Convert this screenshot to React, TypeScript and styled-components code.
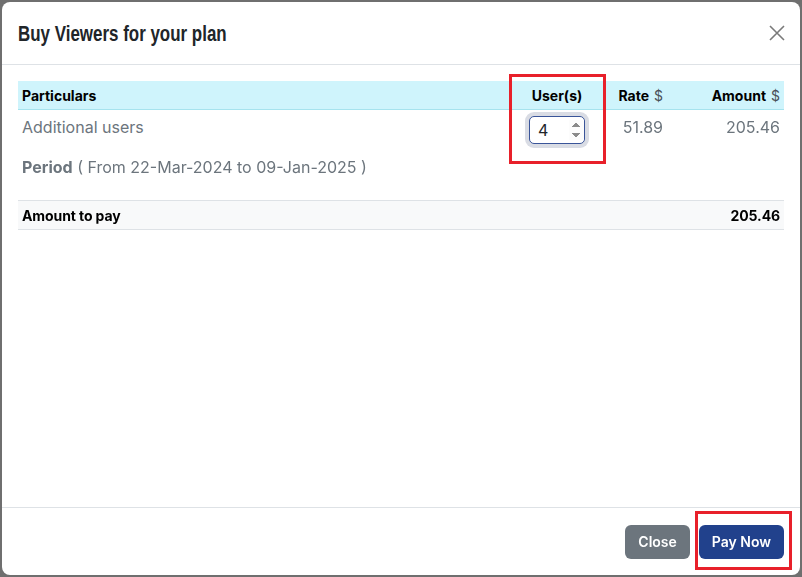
import styled, { createGlobalStyle } from 'styled-components';

const GlobalStyle = createGlobalStyle`
  html, body {
    margin: 0;
    padding: 0;
    height: 100%;
    background: #6f6f6f;
    overflow: hidden;
  }
  body {
    font-family: Inter, "Noto Sans", sans-serif;
    color: #212529;
  }
`;

const Backdrop = styled.div`
  position: relative;
  height: 100vh;
  padding: 2px;
  box-sizing: border-box;
`;

const Modal = styled.div`
  height: 100%;
  display: flex;
  flex-direction: column;
  background: #fff;
  border-radius: 8px;
  overflow: hidden;
`;

const Header = styled.div`
  display: flex;
  align-items: center;
  justify-content: space-between;
  height: 62px;
  padding: 0 16px;
  border-bottom: 1px solid #dee2e6;
`;

// condensed display face: squeeze a bold sans since no narrow font is installed
const Title = styled.h5`
  margin: 2px 0 0;
  font-family: "Liberation Sans", Arial, sans-serif;
  font-weight: 700;
  font-size: 22px;
  color: #212529;
  white-space: nowrap;
  transform: scaleX(0.77);
  transform-origin: left center;
`;

const CloseIcon = styled.button`
  display: flex;
  border: none;
  background: transparent;
  padding: 0;
  margin-right: -1px;
  cursor: pointer;
`;

const Body = styled.div`
  flex: 1;
  padding: 16px;
`;

const Row = styled.div<{ $head?: boolean; $total?: boolean }>`
  display: grid;
  grid-template-columns: 1fr 96px 62px 117px;
  align-items: center;
  background: ${(p) => (p.$head ? '#cff4fc' : p.$total ? '#f8f9fa' : 'transparent')};
  border-bottom: ${(p) => (p.$head ? '1px solid #a6e3ee' : 'none')};
  height: ${(p) => (p.$head ? '28px' : 'auto')};
`;

const Cell = styled.div<{ $align?: 'left' | 'center' | 'right' }>`
  text-align: ${(p) => p.$align || 'left'};
  padding: 0 4px;
`;

const HeadText = styled.span`
  font-size: 14px;
  font-weight: 700;
  color: #000;
`;

const Dollar = styled.span`
  font-size: 14px;
  font-weight: 400;
  color: #495057;
  margin-left: 5px;
`;

const Muted = styled.span`
  font-size: 16px;
  line-height: 22px;
  color: #6c757d;
`;

const ItemRow = styled(Row)`
  align-items: start;
  padding-top: 6px;
`;

const InputWrap = styled.div`
  display: flex;
  justify-content: center;
`;

const NumberInput = styled.input`
  width: 46px;
  height: 26px;
  box-sizing: content-box;
  padding: 0 0 0 8px;
  font-family: Inter, sans-serif;
  font-size: 16px;
  color: #212529;
  border: 1px solid #3a5599;
  border-radius: 5px;
  outline: none;
  box-shadow: 0 0 0 4px #d9dce4;
`;

const Period = styled.div`
  padding: 12px 4px 0;
  font-size: 16px;
  line-height: 22px;
  color: #6c757d;
  b {
    font-weight: 700;
  }
`;

const TotalRow = styled(Row)`
  margin-top: 22px;
  height: 30px;
  box-sizing: border-box;
  border-top: 1px solid #dee2e6;
  border-bottom: 1px solid #dee2e6;
`;

const TotalText = styled.span`
  font-size: 14px;
  font-weight: 700;
  color: #000;
  letter-spacing: -0.1px;
`;

const Footer = styled.div`
  display: flex;
  justify-content: flex-end;
  align-items: center;
  gap: 9px;
  height: 68px;
  padding: 0 16px 0 12px;
  border-top: 1px solid #dee2e6;
  box-sizing: border-box;
`;

const Button = styled.button<{ $primary?: boolean }>`
  height: 34px;
  padding: 0 13px;
  border: none;
  border-radius: 6px;
  font-family: Inter, sans-serif;
  font-size: 14px;
  font-weight: 600;
  color: #fff;
  background: ${(p) => (p.$primary ? '#21418c' : '#6c757d')};
  cursor: pointer;
`;

const Marker = styled.div`
  position: absolute;
  border: 3px solid #e8202a;
  box-sizing: border-box;
  pointer-events: none;
`;

export default function App() {
  return (
    <>
      <GlobalStyle />
      <Backdrop>
        <Modal>
          <Header>
            <Title>Buy Viewers for your plan</Title>
            <CloseIcon aria-label="Close">
              <svg width="16" height="16" viewBox="0 0 16 16">
                <path d="M1 1L15 15M15 1L1 15" stroke="#7a7a7a" strokeWidth="1.6" />
              </svg>
            </CloseIcon>
          </Header>
          <Body>
            <Row $head>
              <Cell><HeadText>Particulars</HeadText></Cell>
              <Cell $align="center"><HeadText>User(s)</HeadText></Cell>
              <Cell $align="right"><HeadText>Rate</HeadText><Dollar>$</Dollar></Cell>
              <Cell $align="right"><HeadText>Amount</HeadText><Dollar>$</Dollar></Cell>
            </Row>
            <ItemRow>
              <Cell><Muted>Additional users</Muted></Cell>
              <InputWrap>
                <NumberInput type="number" defaultValue={4} autoFocus />
              </InputWrap>
              <Cell $align="right"><Muted>51.89</Muted></Cell>
              <Cell $align="right"><Muted>205.46</Muted></Cell>
            </ItemRow>
            <Period>
              <b>Period</b> ( From 22-Mar-2024 to 09-Jan-2025 )
            </Period>
            <TotalRow $total>
              <Cell><TotalText>Amount to pay</TotalText></Cell>
              <Cell />
              <Cell />
              <Cell $align="right"><TotalText>205.46</TotalText></Cell>
            </TotalRow>
          </Body>
          <Footer>
            <Button>Close</Button>
            <Button $primary>Pay Now</Button>
          </Footer>
        </Modal>
        <Marker style={{ left: 509, top: 74, width: 97, height: 90 }} />
        <Marker style={{ left: 695, top: 511, width: 97, height: 59 }} />
      </Backdrop>
    </>
  );
}
